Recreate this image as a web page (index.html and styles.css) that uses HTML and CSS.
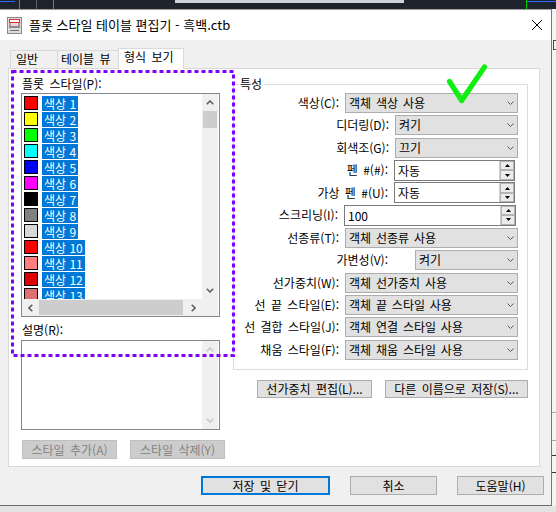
FILE: index.html
```html
<!DOCTYPE html>
<html lang="ko">
<head>
<meta charset="utf-8">
<title>플롯 스타일 테이블 편집기</title>
<link rel="stylesheet" href="styles.css">
</head>
<body>
<div class="screen">
  <div class="topbar"></div>
  <div class="mid">
    <div class="dialog">
      <div class="titlebar">
        <svg class="appicon" viewBox="0 0 15 17" width="15" height="17">
          <rect x="0.5" y="0.5" width="14" height="16" fill="#dcdcdc" stroke="#8a8a8a"/>
          <rect x="2.5" y="2.5" width="10" height="3" fill="#fff" stroke="#e03030"/>
          <path d="M3 6v3M12 6v3" stroke="#e03030"/>
          <rect x="2" y="9" width="11" height="2" fill="#8c8c8c"/>
          <path d="M3 13.5h9" stroke="#707070"/>
        </svg>
        <span class="title">플롯 스타일 테이블 편집기 - 흑백.ctb</span>
        <svg class="close" viewBox="0 0 10 10" width="10" height="10">
          <path d="M0 0L10 10M10 0L0 10" stroke="#000" stroke-width="1"/>
        </svg>
      </div>
      <div class="body">
        <div class="tabs">
          <div class="tab t1">일반</div>
          <div class="tab t2">테이블 뷰</div>
          <div class="tab t3 active">형식 보기</div>
        </div>
        <div class="panel">
          <div class="leftcol">
            <div class="lbl">플롯 스타일(P):</div>
            <div class="listbox">
              <div class="lb-main">
                <div class="items">
                  <div class="item"><span class="sw c1"></span><span class="name">색상 1</span></div>
                  <div class="item"><span class="sw c2"></span><span class="name">색상 2</span></div>
                  <div class="item"><span class="sw c3"></span><span class="name">색상 3</span></div>
                  <div class="item"><span class="sw c4"></span><span class="name">색상 4</span></div>
                  <div class="item"><span class="sw c5"></span><span class="name">색상 5</span></div>
                  <div class="item"><span class="sw c6"></span><span class="name">색상 6</span></div>
                  <div class="item"><span class="sw c7"></span><span class="name">색상 7</span></div>
                  <div class="item"><span class="sw c8"></span><span class="name">색상 8</span></div>
                  <div class="item"><span class="sw c9"></span><span class="name">색상 9</span></div>
                  <div class="item"><span class="sw c10"></span><span class="name">색상 10</span></div>
                  <div class="item"><span class="sw c11"></span><span class="name">색상 11</span></div>
                  <div class="item"><span class="sw c12"></span><span class="name">색상 12</span></div>
                  <div class="item"><span class="sw c13"></span><span class="name">색상 13</span></div>
                </div>
                <div class="vscroll">
                  <div class="arrowbox"><svg width="8" height="5" viewBox="0 0 8 5"><polyline points="0.8,4.3 4,1 7.2,4.3" fill="none" stroke="#606060" stroke-width="1.6"/></svg></div>
                  <div class="vthumb"></div>
                  <div class="spacer"></div>
                  <div class="arrowbox"><svg width="8" height="5" viewBox="0 0 8 5"><polyline points="0.8,0.7 4,4 7.2,0.7" fill="none" stroke="#606060" stroke-width="1.6"/></svg></div>
                </div>
              </div>
              <div class="hscroll">
                <div class="hbar">
                  <div class="harrow"><svg width="5" height="8" viewBox="0 0 5 8"><polyline points="4.3,0.8 1,4 4.3,7.2" fill="none" stroke="#606060" stroke-width="1.6"/></svg></div>
                  <div class="hthumb"></div>
                  <div class="spacer"></div>
                  <div class="harrow"><svg width="5" height="8" viewBox="0 0 5 8"><polyline points="0.7,0.8 4,4 0.7,7.2" fill="none" stroke="#606060" stroke-width="1.6"/></svg></div>
                </div>
                <div class="corner"></div>
              </div>
            </div>
            <div class="lbl desc-lbl">설명(R):</div>
            <div class="descbox">
              <div class="dvscroll">
                <div class="arrowbox"><svg width="8" height="5" viewBox="0 0 8 5"><polyline points="0.8,4.3 4,1 7.2,4.3" fill="none" stroke="#c6c6c6" stroke-width="1.6"/></svg></div>
                <div class="spacer"></div>
                <div class="arrowbox"><svg width="8" height="5" viewBox="0 0 8 5"><polyline points="0.8,0.7 4,4 7.2,0.7" fill="none" stroke="#c6c6c6" stroke-width="1.6"/></svg></div>
              </div>
            </div>
            <div class="lbtns">
              <div class="btn disabled w95">스타일 추가(A)</div>
              <div class="btn disabled w95">스타일 삭제(Y)</div>
            </div>
          </div>
          <div class="rightcol">
            <div class="group">
              <div class="gtitle">특성</div>
              <div class="rows">
                <div class="row"><span class="rl">색상(C):</span><div class="combo w173"><span class="val">객체 색상 사용</span><svg class="chev" width="7" height="4" viewBox="0 0 7 4"><polyline points="0.5,0.5 3.5,3.5 6.5,0.5" fill="none" stroke="#5a5a5a"/></svg></div></div>
                <div class="row"><span class="rl">디더링(D):</span><div class="combo w123"><span class="val">켜기</span><svg class="chev" width="7" height="4" viewBox="0 0 7 4"><polyline points="0.5,0.5 3.5,3.5 6.5,0.5" fill="none" stroke="#5a5a5a"/></svg></div></div>
                <div class="row"><span class="rl">회색조(G):</span><div class="combo w123"><span class="val">끄기</span><svg class="chev" width="7" height="4" viewBox="0 0 7 4"><polyline points="0.5,0.5 3.5,3.5 6.5,0.5" fill="none" stroke="#5a5a5a"/></svg></div></div>
                <div class="row"><span class="rl">펜 #(#):</span><div class="spin s121"><span class="sval">자동</span><div class="sbtns"><div class="sb"><svg width="5" height="3" viewBox="0 0 5 3"><polygon points="0,3 2.5,0 5,3" fill="#000"/></svg></div><div class="sb"><svg width="5" height="3" viewBox="0 0 5 3"><polygon points="0,0 2.5,3 5,0" fill="#000"/></svg></div></div></div></div>
                <div class="row"><span class="rl">가상 펜 #(U):</span><div class="spin s121"><span class="sval">자동</span><div class="sbtns"><div class="sb"><svg width="5" height="3" viewBox="0 0 5 3"><polygon points="0,3 2.5,0 5,3" fill="#000"/></svg></div><div class="sb"><svg width="5" height="3" viewBox="0 0 5 3"><polygon points="0,0 2.5,3 5,0" fill="#000"/></svg></div></div></div></div>
                <div class="row"><span class="rl">스크리닝(I):</span><div class="spin s172"><span class="sval">100</span><div class="sbtns"><div class="sb"><svg width="5" height="3" viewBox="0 0 5 3"><polygon points="0,3 2.5,0 5,3" fill="#000"/></svg></div><div class="sb"><svg width="5" height="3" viewBox="0 0 5 3"><polygon points="0,0 2.5,3 5,0" fill="#000"/></svg></div></div></div></div>
                <div class="row"><span class="rl">선종류(T):</span><div class="combo w173"><span class="val">객체 선종류 사용</span><svg class="chev" width="7" height="4" viewBox="0 0 7 4"><polyline points="0.5,0.5 3.5,3.5 6.5,0.5" fill="none" stroke="#5a5a5a"/></svg></div></div>
                <div class="row"><span class="rl wide-gap">가변성(V):</span><div class="combo w103"><span class="val">켜기</span><svg class="chev" width="7" height="4" viewBox="0 0 7 4"><polyline points="0.5,0.5 3.5,3.5 6.5,0.5" fill="none" stroke="#5a5a5a"/></svg></div></div>
                <div class="row"><span class="rl">선가중치(W):</span><div class="combo w173"><span class="val">객체 선가중치 사용</span><svg class="chev" width="7" height="4" viewBox="0 0 7 4"><polyline points="0.5,0.5 3.5,3.5 6.5,0.5" fill="none" stroke="#5a5a5a"/></svg></div></div>
                <div class="row"><span class="rl">선 끝 스타일(E):</span><div class="combo w173"><span class="val">객체 끝 스타일 사용</span><svg class="chev" width="7" height="4" viewBox="0 0 7 4"><polyline points="0.5,0.5 3.5,3.5 6.5,0.5" fill="none" stroke="#5a5a5a"/></svg></div></div>
                <div class="row"><span class="rl">선 결합 스타일(J):</span><div class="combo w173"><span class="val">객체 연결 스타일 사용</span><svg class="chev" width="7" height="4" viewBox="0 0 7 4"><polyline points="0.5,0.5 3.5,3.5 6.5,0.5" fill="none" stroke="#5a5a5a"/></svg></div></div>
                <div class="row"><span class="rl">채움 스타일(F):</span><div class="combo w173"><span class="val">객체 채움 스타일 사용</span><svg class="chev" width="7" height="4" viewBox="0 0 7 4"><polyline points="0.5,0.5 3.5,3.5 6.5,0.5" fill="none" stroke="#5a5a5a"/></svg></div></div>
              </div>
            </div>
            <div class="rbtns">
              <div class="btn w115">선가중치 편집(L)...</div>
              <div class="btn w143">다른 이름으로 저장(S)...</div>
            </div>
          </div>
        </div>
        <div class="dlgbtns">
          <div class="btn dbtn default w129">저장 및 닫기</div>
          <div class="btn dbtn w87">취소</div>
          <div class="btn dbtn w87">도움말(H)</div>
        </div>
      </div>
      <svg class="dots" width="224" height="287" viewBox="0 0 224 287">
        <rect x="1.5" y="1.5" width="221" height="284" fill="none" stroke="#8000ff" stroke-width="3" stroke-dasharray="4 3"/>
      </svg>
      <svg class="check" width="55" height="55" viewBox="0 0 55 55">
        <polyline points="9.5,26.5 21.7,45.5 44.5,12" fill="none" stroke="#11ee11" stroke-width="5.2" stroke-linecap="round" stroke-linejoin="round"/>
      </svg>
    </div>
    <div class="rightstrip"></div>
  </div>
</div>
</body>
</html>
```

FILE: styles.css
```css
* { box-sizing: border-box; }

body {
  margin: 0;
  font-family: "Noto Sans CJK KR", "Noto Sans", sans-serif;
  font-size: 12px;
  color: #000;
}

.screen {
  width: 556px;
  height: 512px;
  overflow: hidden;
  display: flex;
  flex-direction: column;
  background: #e4e4e4;
}

.topbar {
  flex: none;
  height: 9px;
  background:
    linear-gradient(#2d6bff, #2d6bff) 0 1px / 15px 1px no-repeat,
    linear-gradient(#00d000, #00d000) 19px 0 / 1px 9px no-repeat,
    linear-gradient(#5a5f68, #5a5f68) 36px 0 / 1px 9px no-repeat,
    linear-gradient(#00d000, #00d000) 53px 0 / 1px 9px no-repeat,
    linear-gradient(#cfd2d6, #cfd2d6) 175px 0 / 229px 3px no-repeat,
    linear-gradient(#00d000, #00d000) 526px 0 / 1px 9px no-repeat,
    linear-gradient(#2d6bff, #2d6bff) 527px 1px / 29px 1px no-repeat,
    #1f232b;
}

.mid {
  flex: none;
  display: flex;
  height: 497px;
}

.dialog {
  position: relative;
  flex: none;
  width: 552px;
  height: 497px;
  border-top: 1px solid #9c9c9c;
  border-right: 1px solid #767676;
  border-bottom: 1px solid #6f6f6f;
  background: #f0f0f0;
  display: flex;
  flex-direction: column;
}

.rightstrip {
  flex: 1;
  background:
    linear-gradient(#444, #444) 1px 31px / 3px 1px no-repeat,
    linear-gradient(#444, #444) 1px 31px / 1px 10px no-repeat,
    linear-gradient(#444, #444) 1px 40px / 3px 1px no-repeat,
    linear-gradient(#a8a8a8, #a8a8a8) 0 403px / 4px 1px no-repeat,
    linear-gradient(#a8a8a8, #a8a8a8) 0 431px / 4px 1px no-repeat,
    linear-gradient(#333, #333) 0 446px / 4px 1px no-repeat,
    linear-gradient(#333, #333) 0 463px / 4px 1px no-repeat,
    #f4f4f4;
}

/* title bar */
.titlebar {
  flex: none;
  height: 30px;
  background: #fff;
  display: flex;
  align-items: center;
  padding-left: 7px;
}
.appicon { flex: none; }
.title {
  margin-left: 7px;
  font-size: 13px;
  line-height: 16px;
  white-space: nowrap;
}
.close {
  margin-left: auto;
  margin-right: 9px;
  margin-bottom: 1px;
  flex: none;
}

/* body */
.body {
  flex: 1;
  display: flex;
  flex-direction: column;
  padding: 8px 11px 0 8px;
}

.tabs {
  flex: none;
  display: flex;
  align-items: flex-end;
  height: 20px;
  padding-left: 2px;
}
.tab {
  height: 18px;
  line-height: 16px;
  border: 1px solid #d9d9d9;
  border-bottom: none;
  background: #f0f0f0;
  margin-left: -1px;
  white-space: nowrap;
  word-spacing: 2px;
}
.t1 { width: 48px; padding-left: 5px; margin-left: 0; }
.t2 { width: 62px; padding-left: 3px; }
.t3 { width: 66px; padding-left: 5px; }
.tab.active {
  height: 21px;
  line-height: 15px;
  background: #fff;
  margin-bottom: -1px;
  position: relative;
  z-index: 1;
}

.panel {
  flex: none;
  display: flex;
  width: 532px;
  height: 399px;
  background: #fff;
  border: 1px solid #d9d9d9;
}

/* left column */
.leftcol {
  flex: none;
  width: 199px;
  margin-left: 12px;
  padding-top: 7px;
}
.lbl {
  height: 16px;
  line-height: 16px;
  padding-left: 1px;
  white-space: nowrap;
  word-spacing: 2px;
}
.desc-lbl { margin-top: 5px; }

.listbox {
  margin-top: 1px;
  height: 224px;
  border: 1px solid #828790;
  display: flex;
  flex-direction: column;
}
.lb-main {
  flex: none;
  display: flex;
  height: 205px;
}
.items {
  width: 180px;
  padding-top: 1px;
  overflow: hidden;
}
.item {
  height: 16px;
  display: flex;
  align-items: center;
  padding-left: 2px;
}
.sw {
  flex: none;
  width: 14px;
  height: 14px;
  border: 1px solid #000;
}
.c1 { background: #ff0000; }
.c2 { background: #ffff00; }
.c3 { background: #00ff00; }
.c4 { background: #00ffff; }
.c5 { background: #0000ff; }
.c6 { background: #ff00ff; }
.c7 { background: #000000; }
.c8 { background: #808080; }
.c9 { background: #d9d9d9; }
.c10 { background: #ff0000; }
.c11 { background: #ff7f7f; }
.c12 { background: #dd0000; }
.c13 { background: #dd7070; }
.name {
  margin-left: 4px;
  height: 15px;
  line-height: 15px;
  padding: 0 2px;
  background: #0078d7;
  color: #fff;
  white-space: nowrap;
}

.vscroll, .dvscroll {
  flex: none;
  width: 16px;
  background: #f0f0f0;
  display: flex;
  flex-direction: column;
}
.arrowbox {
  flex: none;
  height: 17px;
  display: flex;
  align-items: center;
  justify-content: center;
}
.vthumb {
  flex: none;
  height: 17px;
  margin: 0 1px;
  background: #cdcdcd;
}
.spacer { flex: 1; }

.hscroll {
  flex: none;
  height: 17px;
  display: flex;
}
.hbar {
  width: 180px;
  display: flex;
  background: #f0f0f0;
}
.harrow {
  flex: none;
  width: 17px;
  display: flex;
  align-items: center;
  justify-content: center;
}
.hthumb {
  flex: none;
  width: 144px;
  margin: 1px 0 1px 0;
  background: #cdcdcd;
}
.corner {
  width: 16px;
  background: #f0f0f0;
}

.descbox {
  margin-top: 2px;
  height: 90px;
  border: 1px solid #828790;
  display: flex;
  padding-left: 180px;
}

.lbtns {
  display: flex;
  gap: 13px;
  margin-top: 10px;
  margin-left: 1px;
}

/* buttons */
.btn {
  flex: none;
  height: 19px;
  line-height: 17px;
  border: 1px solid #adadad;
  background: #e1e1e1;
  text-align: center;
  white-space: nowrap;
  word-spacing: 2px;
}
.btn.disabled {
  background: #cccccc;
  border-color: #bfbfbf;
  color: #838383;
}
.w95 { width: 95px; }
.w115 { width: 115px; }
.w143 { width: 143px; }
.w129 { width: 129px; }
.w87 { width: 87px; }

/* right column */
.rightcol {
  flex: none;
  width: 295px;
  margin-left: 13px;
  padding-top: 15px;
}
.group {
  height: 286px;
  border: 1px solid #dcdcdc;
  padding-right: 9px;
}
.gtitle {
  width: fit-content;
  height: 16px;
  line-height: 16px;
  margin: -9px 0 0 5px;
  padding: 0 1px;
  background: #fff;
}
.rows {
  margin-top: 1px;
  display: grid;
  grid-auto-rows: 22.45px;
  align-items: start;
}
.row {
  display: flex;
  justify-content: flex-end;
  align-items: center;
  gap: 6px;
  height: 20px;
}
.rl {
  line-height: 16px;
  white-space: nowrap;
  word-spacing: 2px;
}
.rl.wide-gap { margin-right: 21px; }

.combo {
  flex: none;
  height: 20px;
  border: 1px solid #adadad;
  background: #e1e1e1;
  display: flex;
  align-items: center;
  padding: 0 3px 0 3px;
}
.combo .val {
  flex: 1;
  line-height: 16px;
  white-space: nowrap;
  word-spacing: 1.5px;
}
.chev { flex: none; }
.w173 { width: 173px; }
.w123 { width: 123px; }
.w103 { width: 103px; }

.spin {
  flex: none;
  height: 21px;
  display: flex;
  border: 1px solid #7a7a7a;
  background: #fff;
}
.s121 { width: 121px; margin-right: 3px; }
.s172 { width: 172px; margin-right: 2px; }
.sval {
  flex: 1;
  padding-left: 3px;
  line-height: 19px;
}
.sbtns {
  flex: none;
  width: 15px;
  display: flex;
  flex-direction: column;
  border-left: 1px solid #d0d0d0;
}
.sb {
  flex: 1;
  display: flex;
  align-items: center;
  justify-content: center;
  background: #ececec;
  border: 1px solid #b4b4b4;
}

.rbtns {
  display: flex;
  justify-content: flex-end;
  gap: 13px;
  margin-top: 10px;
}
.rbtns .btn { height: 18px; line-height: 16px; }

/* dialog buttons */
.dlgbtns {
  display: flex;
  justify-content: flex-end;
  gap: 20px;
  margin-top: 9px;
  margin-right: -4px;
}
.btn.default {
  border: 2px solid #0078d7;
  line-height: 15px;
}

/* annotations */
.dots {
  position: absolute;
  left: 11px;
  top: 60px;
  z-index: 2;
}
.check {
  position: absolute;
  left: 440px;
  top: 45px;
  z-index: 2;
}
```
